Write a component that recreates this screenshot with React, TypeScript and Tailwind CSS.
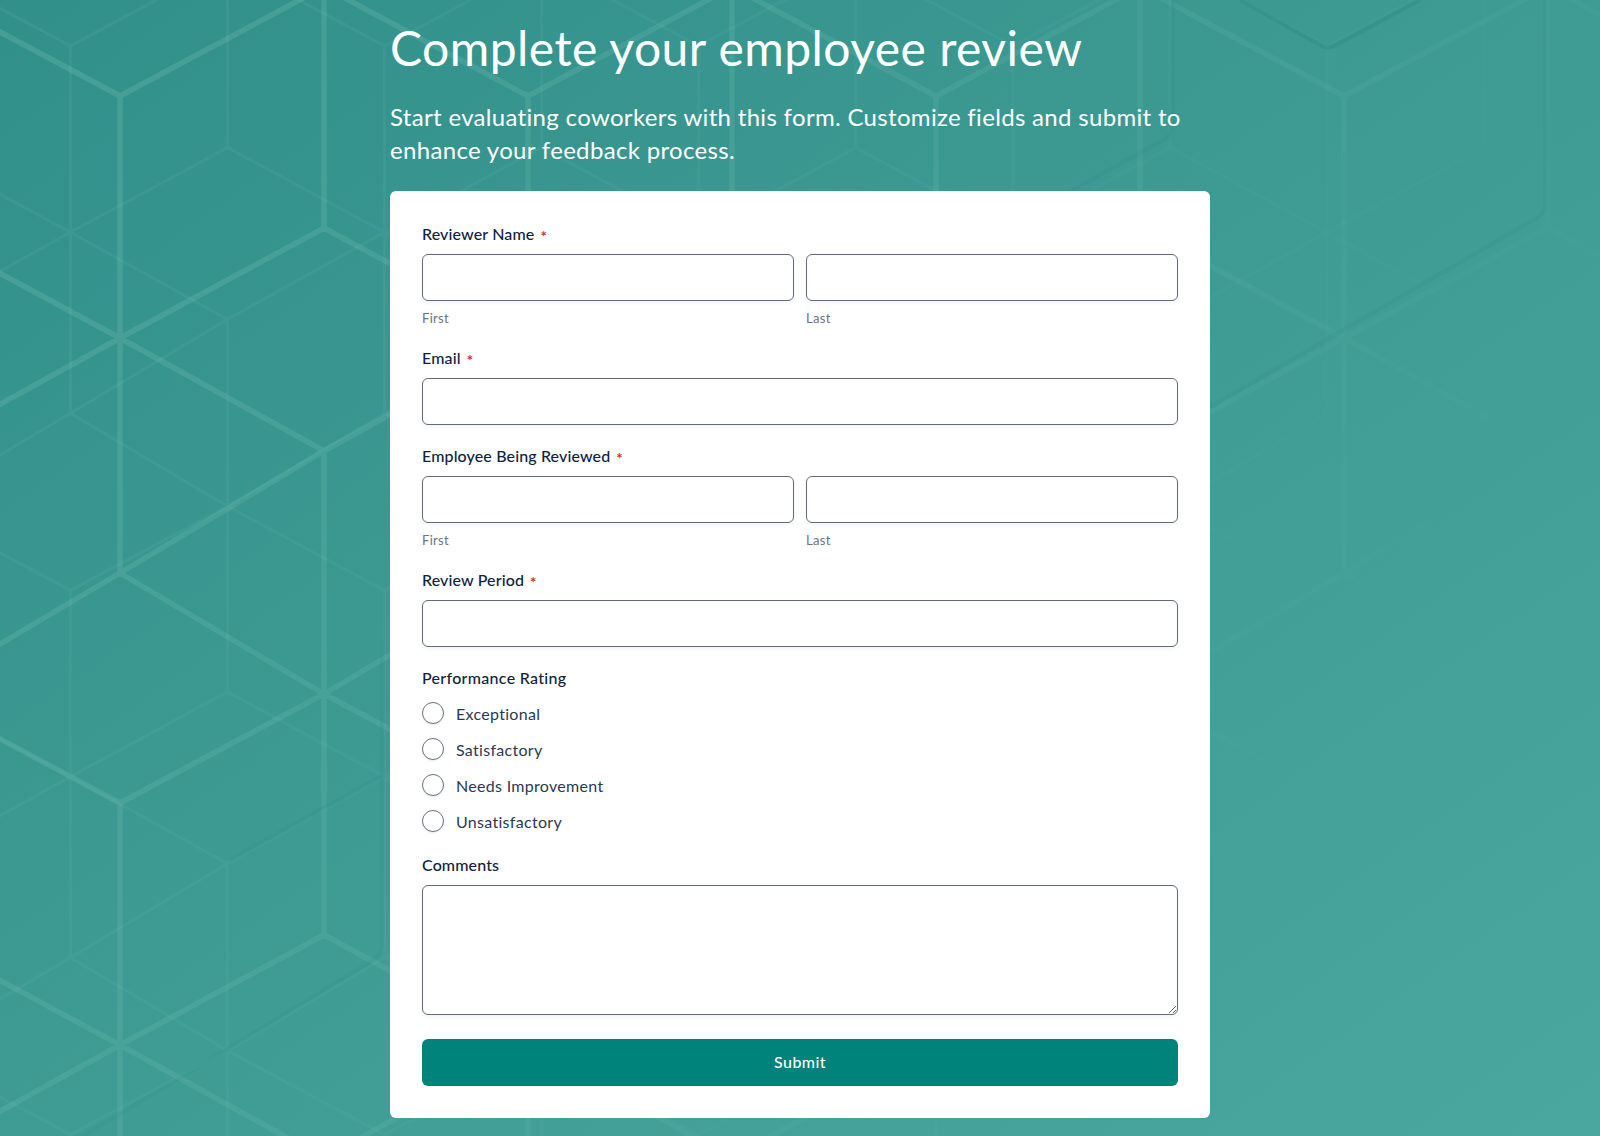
import React from "react";

type Edge = [number, number, number, number];

// one repeat of the cube lattice, split at its nodes
const unit: Edge[] = [
  [120, 96, 324, -13],
  [120, 96, -84, -13],
  [120, 96, 120, 338],
  [120, 338, 120, 573],
  [120, 338, 324, 228],
  [120, 338, -84, 228],
  [120, 338, 324, 451],
  [120, 338, -84, 451],
  [120, 573, 324, 451],
  [120, 573, 324, 694],
  [120, 573, -84, 694],
  [324, -13, 324, 228],
  [324, 451, 324, 694],
];

function buildLattice() {
  const arms = new Map<string, { x: number; y: number; list: [number, number][] }>();
  let lines = "";
  for (let k = -1; k <= 4; k++) {
    for (let j = -1; j <= 2; j++) {
      for (const [a, b, c, d] of unit) {
        const x1 = a + k * 408;
        const y1 = b + j * 707;
        const x2 = c + k * 408;
        const y2 = d + j * 707;
        lines += `M${x1} ${y1}L${x2} ${y2}`;
        const add = (x: number, y: number, ox: number, oy: number) => {
          const key = `${x},${y}`;
          if (!arms.has(key)) arms.set(key, { x, y, list: [] });
          const len = Math.hypot(ox - x, oy - y);
          arms.get(key)!.list.push([(ox - x) / len, (oy - y) / len]);
        };
        add(x1, y1, x2, y2);
        add(x2, y2, x1, y1);
      }
    }
  }
  let fillets = "";
  const r = 12;
  arms.forEach(({ x, y, list }) => {
    const sorted = [...list].sort((p, q) => Math.atan2(p[1], p[0]) - Math.atan2(q[1], q[0]));
    sorted.forEach((p, i) => {
      const q = sorted[(i + 1) % sorted.length];
      if (p[0] * q[0] + p[1] * q[1] < -0.8) return;
      if (p[0] * q[1] - p[1] * q[0] <= 0) return;
      fillets += `M${x} ${y}L${x + p[0] * r} ${y + p[1] * r}Q${x} ${y} ${x + q[0] * r} ${y + q[1] * r}Z`;
    });
  });
  return { lines, fillets };
}

const lattice = buildLattice();

function Background() {
  return (
    <svg className="absolute inset-0 h-full w-full" viewBox="0 0 1600 1136" preserveAspectRatio="none" fill="none">
      <defs>
        <linearGradient id="fade" gradientUnits="userSpaceOnUse" x1="0" y1="0" x2="1487" y2="1010">
          <stop offset="0" stopColor="#fff" />
          <stop offset="0.4" stopColor="#fff" stopOpacity="0.62" />
          <stop offset="0.65" stopColor="#fff" stopOpacity="0.35" />
          <stop offset="0.76" stopColor="#fff" stopOpacity="0.14" />
          <stop offset="0.86" stopColor="#fff" stopOpacity="0" />
        </linearGradient>
        <mask id="fadeMask" maskUnits="userSpaceOnUse" x="0" y="0" width="1600" height="1136">
          <rect width="1600" height="1136" fill="url(#fade)" />
        </mask>
      </defs>
      <g mask="url(#fadeMask)">
        <g opacity="0.055" transform="translate(-22 -28) scale(0.77)">
          <path d={lattice.lines} stroke="#d4fff0" strokeWidth="4" />
          <path d={lattice.fillets} fill="#d4fff0" />
        </g>
        <g opacity="0.13">
          <path d={lattice.lines} stroke="#d4fff0" strokeWidth="5.5" />
          <path d={lattice.fillets} fill="#d4fff0" />
        </g>
      </g>
      <g stroke="#12736b" strokeOpacity="0.07" strokeWidth="4">
        <path d="M1173 0V125Q1173 135 1160 142L1060 197" />
        <path d="M1545 0V205Q1545 215 1530 222L1210 407" />
        <path d="M1240 0L1322 46Q1328 49 1334 46L1420 0" strokeOpacity="0.16" />
        <path d="M382 640V945Q382 955 370 962L180 1078L60 1150" />
        <path d="M382 776L230 860" />
      </g>
    </svg>
  );
}

function Label({ text, required }: { text: string; required?: boolean }) {
  return (
    <div className="mb-2 flex h-[23px] items-center pb-[2px] text-[16px] font-medium tracking-[0.13px] text-[#10233e]">
      {text}
      {required && <span className="relative top-[3px] ml-[6px] text-[15px] font-bold text-[#d0321c]">*</span>}
    </div>
  );
}

const inputClass =
  "block h-[47px] w-full rounded-[6px] border border-[#5f6a80] bg-white shadow-[0_2px_4px_rgba(40,50,90,0.06)] outline-none";

function NameField({ label }: { label: string }) {
  return (
    <div className="mb-5">
      <Label text={label} required />
      <div className="grid grid-cols-2 gap-3">
        {["First", "Last"].map((sub) => (
          <div key={sub}>
            <input type="text" className={inputClass} />
            <div className="mt-2 h-[18px] text-[13px] leading-[18px] tracking-[0.3px] text-[#6b7283]">{sub}</div>
          </div>
        ))}
      </div>
    </div>
  );
}

function TextField({ label }: { label: string }) {
  return (
    <div className="mb-5">
      <Label text={label} required />
      <input type="text" className={inputClass} />
    </div>
  );
}

const ratings = ["Exceptional", "Satisfactory", "Needs Improvement", "Unsatisfactory"];

export default function App() {
  return (
    <div className="relative h-[1136px] w-full overflow-hidden bg-linear-to-br from-[#31908a] to-[#4aa79f] font-['Lato',sans-serif] [font-variant-ligatures:none]">
      <Background />
      <div className="relative mx-auto w-[820px] pt-[19px]">
        <h1 className="text-[48px] leading-[58px] font-normal tracking-[0.46px] text-white">
          Complete your employee review
        </h1>
        <p className="mt-[23px] text-[24px] leading-[33px] font-normal tracking-[0.32px] text-white">
          Start evaluating coworkers with this form. Customize fields and submit to enhance your feedback process.
        </p>
        <form className="mt-[25px] rounded-[6px] bg-white p-8">
          <NameField label="Reviewer Name" />
          <TextField label="Email" />
          <NameField label="Employee Being Reviewed" />
          <TextField label="Review Period" />

          <div className="h-[23px] text-[16px] leading-[21px] font-medium tracking-[0.3px] text-[#10233e]">
            Performance Rating
          </div>
          <div className="mt-[5px] mb-[15px]">
            {ratings.map((r) => (
              <label key={r} className="flex h-9 items-center gap-3 text-[16px] tracking-[0.3px] text-[#2b3a52]">
                <input
                  type="radio"
                  name="rating"
                  className="h-[22px] w-[22px] appearance-none rounded-full border border-[#6b7283] bg-white shadow-[0_1px_2px_rgba(40,50,90,0.12)]"
                />
                <span className="pt-[2px]">{r}</span>
              </label>
            ))}
          </div>

          <Label text="Comments" />
          <textarea className="block h-[130px] w-full rounded-[6px] border border-[#5f6a80] bg-white shadow-[0_2px_4px_rgba(40,50,90,0.06)] outline-none" />
          <button
            type="button"
            className="mt-6 block h-[47px] w-full rounded-[6px] bg-[#00837a] pb-[2px] text-[16px] font-medium tracking-[0.4px] text-white"
          >
            Submit
          </button>
        </form>
      </div>
    </div>
  );
}
